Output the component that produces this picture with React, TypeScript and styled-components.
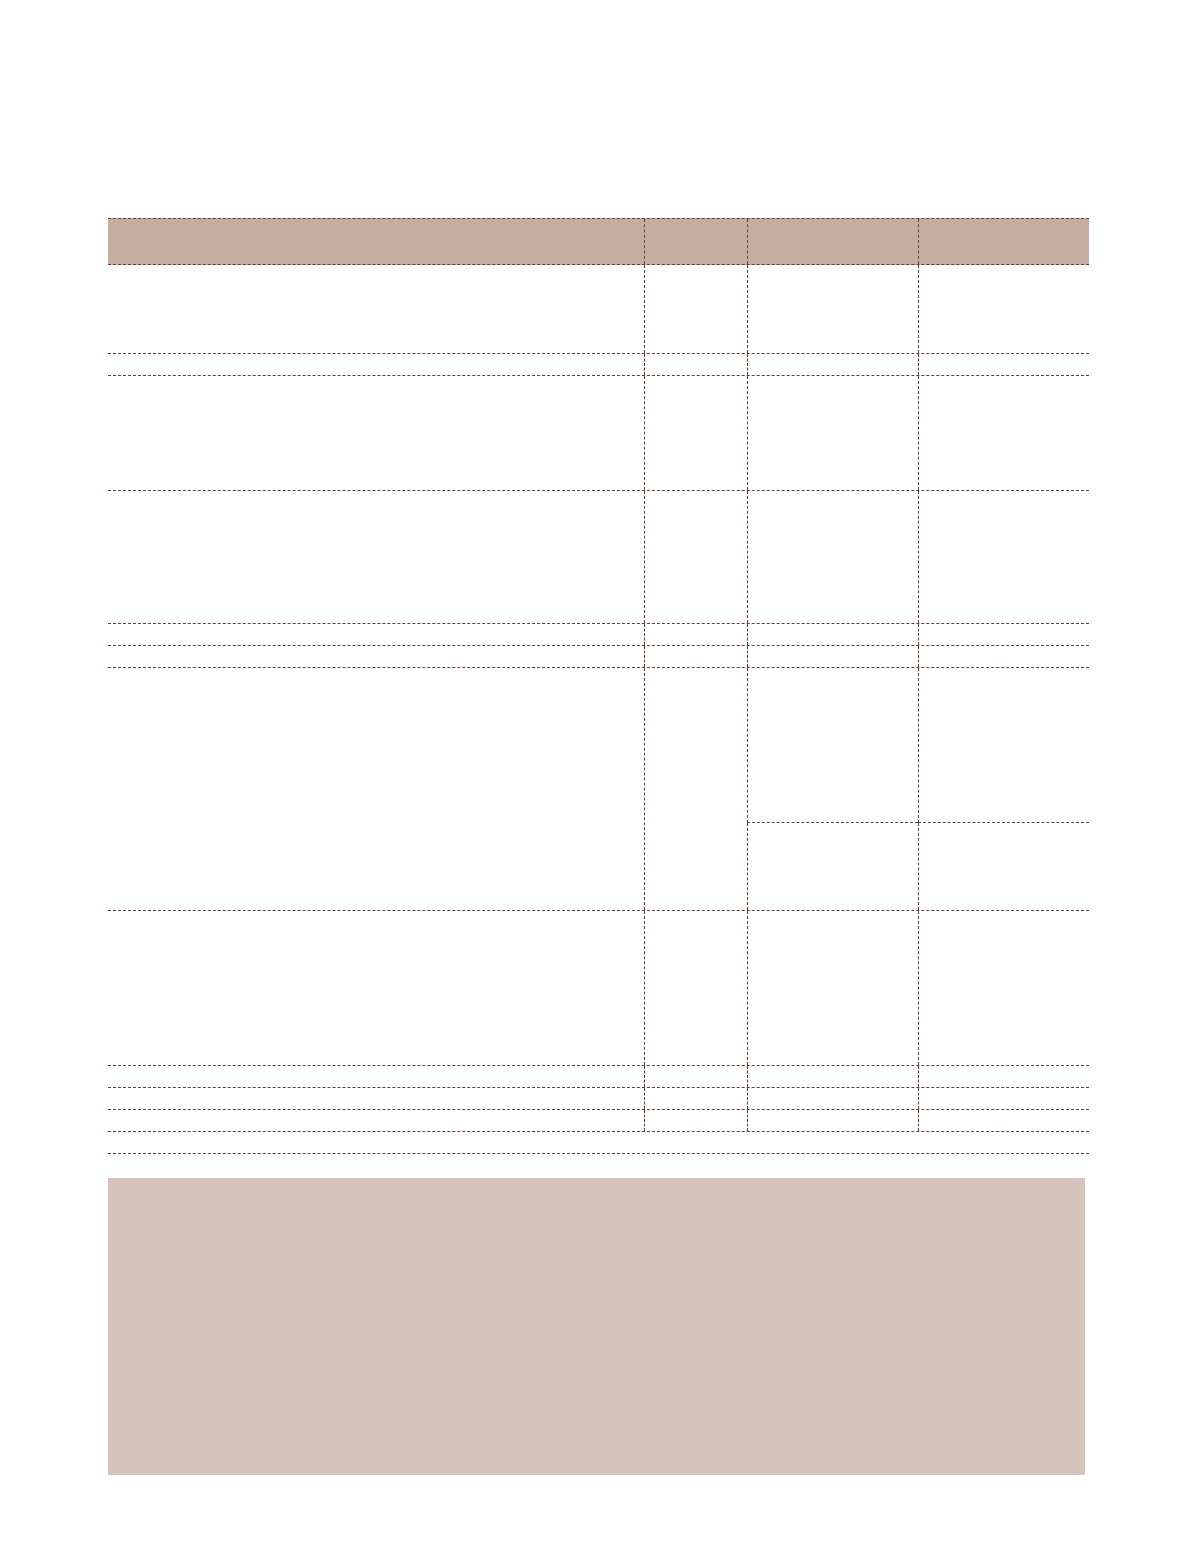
import React from 'react'
import styled, { createGlobalStyle } from 'styled-components'

const LINE = '1px dashed #6b3a30'

const GlobalStyle = createGlobalStyle`
  html, body {
    margin: 0;
    padding: 0;
    background: #ffffff;
    font-family: "Liberation Sans", Arial, sans-serif;
  }
`

const Page = styled.div`
  width: 1194px;
  min-height: 1557px;
  box-sizing: border-box;
  padding: 218px 0 0 108px;
`

const Table = styled.div`
  width: 981px;
  display: flex;
  flex-direction: column;
`

const Row = styled.div<{ h: number; head?: boolean }>`
  display: grid;
  grid-template-columns: 536px 103px 171px 171px;
  height: ${({ h }) => h}px;
  box-sizing: border-box;
  border-bottom: ${LINE};
  border-top: ${({ head }) => (head ? LINE : 'none')};
  background: ${({ head }) => (head ? '#c5ada1' : 'transparent')};
`

const Cell = styled.div<{ first?: boolean }>`
  box-sizing: border-box;
  border-left: ${({ first }) => (first ? 'none' : LINE)};
`

const FullRow = styled.div`
  height: 22px;
  box-sizing: border-box;
  border-bottom: ${LINE};
`

const SplitCells = styled.div`
  grid-column: 3 / 5;
  display: grid;
  grid-template-columns: 171px 171px;
  grid-template-rows: 155px 1fr;
`

const SplitTop = styled(Cell)`
  border-bottom: ${LINE};
`

const NoteBox = styled.div`
  margin-top: 24px;
  width: 977px;
  height: 297px;
  background: #d6c3bb;
`

const rowHeights = [89, 22, 115, 133, 22, 22]
const lowerHeights = [155, 22, 22, 22]

const PlainRow = ({ h, head }: { h: number; head?: boolean }) => (
  <Row h={h} head={head}>
    <Cell first />
    <Cell />
    <Cell />
    <Cell />
  </Row>
)

export default function App() {
  return (
    <>
      <GlobalStyle />
      <Page>
        <Table>
          <PlainRow h={47} head />
          {rowHeights.map((h, i) => (
            <PlainRow key={'a' + i} h={h} />
          ))}
          <Row h={243}>
            <Cell first />
            <Cell />
            <SplitCells>
              <SplitTop />
              <SplitTop />
              <Cell />
              <Cell />
            </SplitCells>
          </Row>
          {lowerHeights.map((h, i) => (
            <PlainRow key={'b' + i} h={h} />
          ))}
          <FullRow />
        </Table>
        <NoteBox />
      </Page>
    </>
  )
}
